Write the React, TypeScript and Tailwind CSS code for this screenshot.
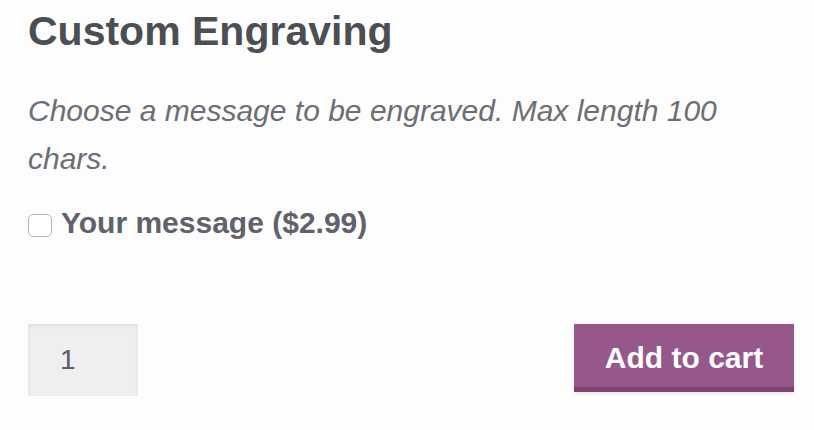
export default function App() {
  return (
    <div className="min-h-screen w-full bg-[#fdfdfd] pl-7 pr-5 pt-[7px] font-['Liberation_Sans',Arial,sans-serif]">
      <h2 className="text-[41px] leading-[48px] font-bold text-[#4b4e53]">Custom Engraving</h2>
      <p className="mt-[32px] text-[30px] leading-[48px] italic text-[#6b6e75]">
        Choose a message to be engraved. Max length 100 chars.
      </p>
      <label className="mt-[24px] flex items-center gap-[9px] text-[30px] leading-[32px] font-bold text-[#5f626a]">
        <span className="mt-[4px] h-[23px] w-[24px] shrink-0 rounded-[5px] border border-[#b5b5b5] bg-white" />
        Your message ($2.99)
      </label>
      <div className="mt-[85px] flex items-start justify-between">
        <div className="flex h-[72px] w-[110px] items-center bg-[#efefef] pl-[32px] text-[28px] text-[#5a5d65] shadow-[inset_0_2px_4px_rgba(0,0,0,0.07)]">
          1
        </div>
        <button className="h-[68px] w-[220px] border-b-[5px] border-[#7b4370] bg-[#96588a] pt-[5px] text-[30px] leading-[36px] font-bold text-white shadow-[0_2px_3px_rgba(0,0,0,0.08)]">
          Add to cart
        </button>
      </div>
    </div>
  );
}
